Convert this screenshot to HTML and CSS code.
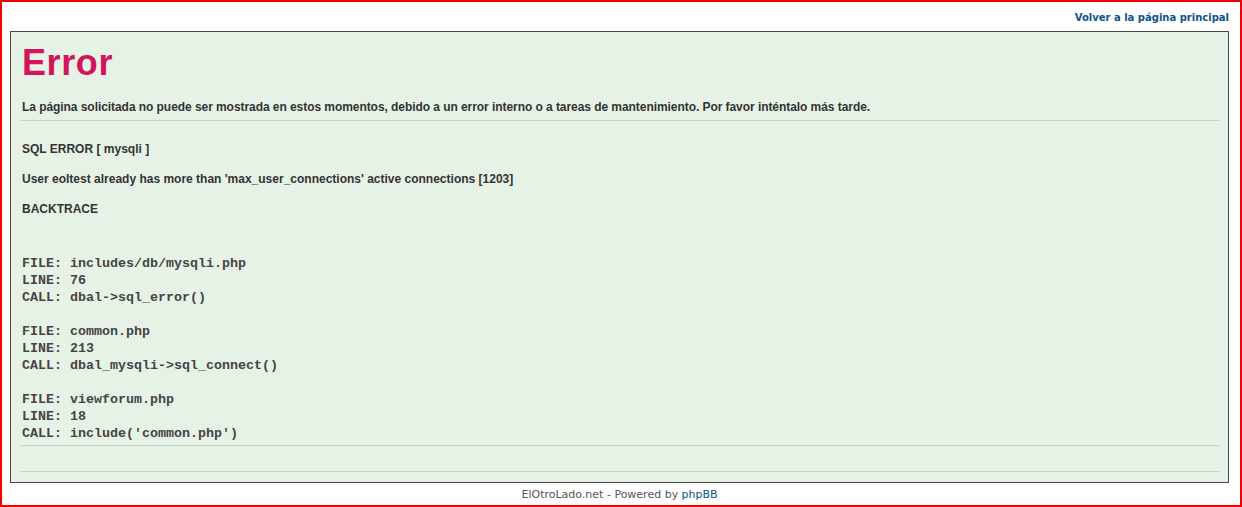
FILE: index.html
```html
<!DOCTYPE html>
<html lang="es">
<head>
<meta charset="utf-8">
<title>Error</title>
<link rel="stylesheet" href="styles.css">
</head>
<body>
<div class="frame">
  <div class="topbar">
    <a class="home-link" href="#">Volver a la página principal</a>
  </div>
  <div class="panel">
    <h1 class="title">Error</h1>
    <p class="msg">La página solicitada no puede ser mostrada en estos momentos, debido a un error interno o a tareas de mantenimiento. Por favor inténtalo más tarde.</p>
    <hr class="rule">
    <p class="sql">SQL ERROR [ mysqli ]</p>
    <p class="sql">User eoltest already has more than 'max_user_connections' active connections [1203]</p>
    <p class="sql">BACKTRACE</p>
    <pre class="trace">FILE: includes/db/mysqli.php
LINE: 76
CALL: dbal-&gt;sql_error()

FILE: common.php
LINE: 213
CALL: dbal_mysqli-&gt;sql_connect()

FILE: viewforum.php
LINE: 18
CALL: include('common.php')</pre>
    <hr class="rule rule-tight">
    <div class="spacer"></div>
    <hr class="rule rule-tight">
  </div>
  <div class="footer">ElOtroLado.net - Powered by <a class="footer-link" href="#">phpBB</a></div>
</div>
</body>
</html>
```

FILE: styles.css
```css
html, body {
  margin: 0;
  padding: 0;
  height: 100%;
  background: #ffffff;
}

.frame {
  box-sizing: border-box;
  height: 100vh;
  border: 2px solid #f00000;
  padding: 0 11px 0 8px;
  display: flex;
  flex-direction: column;
}

.topbar {
  height: 29px;
  display: flex;
  align-items: center;
  justify-content: flex-end;
  padding-top: 1px;
  box-sizing: border-box;
}

.home-link {
  font-family: "DejaVu Sans", Verdana, sans-serif;
  font-size: 10px;
  font-weight: bold;
  color: #105289;
  text-decoration: none;
}

.panel {
  border: 1px solid #3f4d3a;
  background: #e7f2e6;
  padding: 11px 10px 10px 11px;
}

.title {
  margin: 0;
  font-family: "Liberation Sans", Arial, sans-serif;
  font-size: 36px;
  line-height: 40px;
  font-weight: bold;
  color: #d4145a;
  letter-spacing: 0.6px;
}

.msg,
.sql {
  margin: 0;
  font-family: "Liberation Sans", Arial, sans-serif;
  font-size: 12px;
  line-height: 16px;
  font-weight: bold;
  color: #333333;
}

.msg {
  margin-top: 16px;
  letter-spacing: -0.06px;
}

.sql {
  margin-top: 14px;
}

.rule {
  border: 0;
  height: 1px;
  background: #c9d0c9;
  margin: 5px -1px 0 -1px;
}

.rule + .sql {
  margin-top: 20px;
}

.trace {
  margin: 38px 0 0 0;
  font-family: "Liberation Mono", "Courier New", monospace;
  font-size: 13.33px;
  line-height: 17px;
  color: #444444;
  font-weight: bold;
}

.rule-tight {
  margin-top: 3px;
}

.spacer {
  height: 25px;
}

.spacer + .rule-tight {
  margin-top: 0;
}

.footer {
  flex: 1;
  display: flex;
  align-items: center;
  justify-content: center;
  font-family: "DejaVu Sans", Verdana, sans-serif;
  font-size: 11px;
  color: #555555;
}

.footer-link {
  color: #105289;
  text-decoration: none;
  margin-left: 0.3em;
}
```
